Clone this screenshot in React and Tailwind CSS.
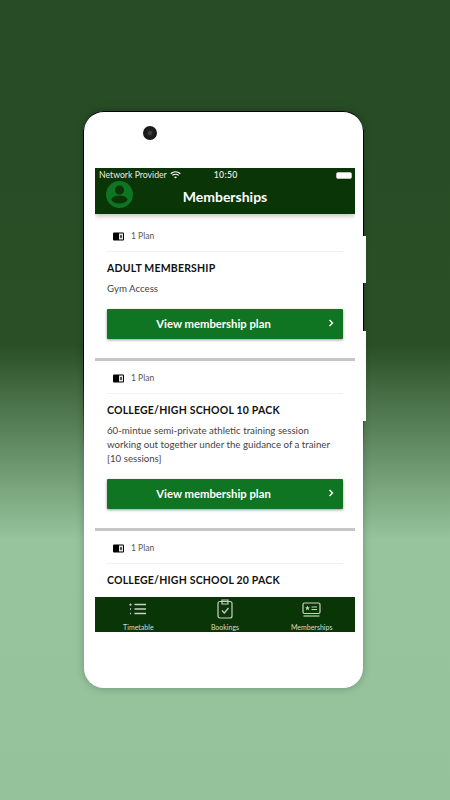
const FONT = 'font-["Lato","Open_Sans",sans-serif]'

function PlanIcon() {
  return (
    <svg width="11" height="9" viewBox="0 0 11 9">
      <rect x="0" y="0.5" width="11" height="8" rx="1" fill="#000" />
      <rect x="6" y="1.5" width="4" height="6" fill="#e8e8e8" />
      <rect x="7" y="3" width="2" height="3" fill="#555" />
    </svg>
  )
}

function Chevron() {
  return (
    <svg width="6" height="8" viewBox="0 0 6 8" fill="none" stroke="#fff" strokeWidth="1.4">
      <path d="M1.5 1 L4.5 4 L1.5 7" />
    </svg>
  )
}

function PlanCard({ title, lines, last }) {
  return (
    <div className={last ? '' : 'border-b-[3px] border-[#c6c6c6]'}>
      <div className="px-[12px]">
        <div className="h-[33px] flex items-center pl-[6px] pt-[3px] gap-[7px] border-b border-[#f1f1f1]">
          <PlanIcon />
          <span className="text-[8.5px] text-[#555]">1 Plan</span>
        </div>
        <h2 className="mt-[8px] h-[16px] leading-[16px] text-[10.5px] font-bold text-[#111] tracking-[0.2px]">{title}</h2>
        <div className="mt-[5px] text-[9.7px] leading-[14px] text-[#444]">
          {lines.map((line) => (
            <p key={line}>{line}</p>
          ))}
        </div>
        {!last && (
          <button
            type="button"
            className="relative mt-[14px] mb-[19px] w-full h-[30px] flex items-center justify-center rounded-[1px] bg-[#0f7522] text-white text-[11.3px] font-bold shadow-[0_1px_3px_rgba(0,0,0,0.4)]"
          >
            <span className="pr-[23px]">View membership plan</span>
            <span className="absolute right-[9px] top-[10px] flex">
              <Chevron />
            </span>
          </button>
        )}
      </div>
    </div>
  )
}

function TimetableIcon() {
  return (
    <svg width="18" height="14" viewBox="0 0 18 14" fill="none" stroke="#c8d2c6" strokeWidth="1.4">
      <path d="M5.5 2.5 H17 M5.5 7 H17 M5.5 11.5 H17" />
      <path d="M1.5 1 L2 2.1 L3 2.3 L2.2 3 L2.4 4 L1.5 3.5 L0.6 4 L0.8 3 L0 2.3 L1 2.1 Z" fill="#c8d2c6" stroke="none" />
      <path d="M1 7 H2 M1 11.5 H2" />
    </svg>
  )
}

function BookingsIcon() {
  return (
    <svg width="16" height="20" viewBox="0 0 16 20" fill="none" stroke="#c8d2c6" strokeWidth="1.2">
      <rect x="1" y="2.5" width="14" height="16.5" rx="2" />
      <path d="M5 1 H11 V5 H5 Z" />
      <path d="M5 11.5 L7.3 14 L11.5 9" />
    </svg>
  )
}

function MembershipsIcon() {
  return (
    <svg width="19" height="15" viewBox="0 0 19 15" fill="none" stroke="#c8d2c6" strokeWidth="1.2">
      <rect x="1" y="1" width="17" height="10.5" rx="1.5" />
      <path d="M1.5 14 H17.5" />
      <path d="M9.5 5 H15 M9.5 7.5 H15" />
      <path d="M5.5 3.6 L6.2 5.3 L8 5.4 L6.6 6.5 L7.1 8.2 L5.5 7.2 L3.9 8.2 L4.4 6.5 L3 5.4 L4.8 5.3 Z" fill="#c8d2c6" stroke="none" />
    </svg>
  )
}

function Tab({ icon, label }) {
  return (
    <div className="flex-1 flex flex-col items-center">
      <div className="h-[22px] flex items-center justify-center">{icon}</div>
      <span className="mt-[3px] text-[7px] leading-[8px] text-[#d5dcd3]">{label}</span>
    </div>
  )
}

export default function App() {
  return (
    <div className={`w-[450px] h-[800px] overflow-hidden pt-[111px] pl-[84px] bg-[linear-gradient(180deg,#274c26_0px,#2a4f26_345px,#97c49d_540px,#95c29b_800px)] ${FONT}`}>
      <div className="relative w-[279px] h-[577px] bg-white rounded-[20px] border-t border-black pt-[56px] px-[11px] shadow-[0_0_8px_rgba(0,0,0,0.25)]">
        {/* dark rim fades out towards the lower part of the phone */}
        <div className="absolute left-[-1px] top-[18px] w-[1px] h-[320px] bg-[linear-gradient(180deg,#000_70%,transparent)]" />
        <div className="absolute right-[-1px] top-[18px] w-[1px] h-[320px] bg-[linear-gradient(180deg,#000_70%,transparent)]" />
        <div className="absolute right-[-3px] top-[124px] w-[3px] h-[47px] bg-white" />
        <div className="absolute right-[-3px] top-[219px] w-[3px] h-[90px] bg-white" />
        <div className="absolute left-[59px] top-[14px] w-[14px] h-[14px] rounded-full bg-[#222] border-[3px] border-[#1a1a1a] flex items-center justify-center">
          <div className="w-[4px] h-[4px] rounded-full bg-[#444]" />
        </div>

        <div className="w-[260px] h-[464px] flex flex-col overflow-hidden">
          <div className="relative z-10 h-[46px] shrink-0 bg-[#0a3507] text-white shadow-[0_2px_5px_rgba(0,0,0,0.25)]">
            <div className="h-[14px] flex items-center px-[4px] text-[8.7px] text-[#e8e8e8]">
              <span>Network Provider</span>
              <svg className="ml-[3px]" width="11" height="8" viewBox="0 0 11 8" fill="none" stroke="#fff" strokeWidth="1.2">
                <path d="M0.7 2.8 C3.5 0.2 7.5 0.2 10.3 2.8 M2.3 4.4 C4 3 7 3 8.7 4.4" />
                <path d="M4 6 L5.5 7.6 L7 6 C6 5.2 5 5.2 4 6 Z" fill="#fff" stroke="none" />
              </svg>
              <span className="ml-[33px] font-semibold tracking-[0.3px]">10:50</span>
              <div className="ml-auto mr-[-1px] w-[16px] h-[7px] rounded-[2px] bg-white border border-[#bbb]" />
            </div>
            <div className="relative h-[32px] flex items-center justify-center pb-[4px]">
              <span className="text-[14px] font-bold">Memberships</span>
              <div className="absolute left-[11px] top-[-1px] w-[27px] h-[27px]">
                <svg width="27" height="27" viewBox="0 0 27 27">
                  <circle cx="13.5" cy="13.5" r="13.5" fill="#0f7522" />
                  <circle cx="13.5" cy="9" r="4.5" fill="#0a3507" />
                  <ellipse cx="13.5" cy="18.5" rx="8" ry="4" fill="#0a3507" />
                </svg>
              </div>
            </div>
          </div>

          <div className="flex-1 min-h-0 overflow-hidden pt-[5px] bg-white">
            <PlanCard title="ADULT MEMBERSHIP" lines={['Gym Access']} />
            <PlanCard
              title="COLLEGE/HIGH SCHOOL 10 PACK"
              lines={[
                '60-mintue semi-private athletic training session',
                'working out together under the guidance of a trainer',
                '[10 sessions]',
              ]}
            />
            <PlanCard
              last
              title="COLLEGE/HIGH SCHOOL 20 PACK"
              lines={['60-mintue semi-private athletic training session']}
            />
          </div>

          <div className="h-[35px] shrink-0 flex bg-[#0a3507] pt-[1px]">
            <Tab icon={<TimetableIcon />} label="Timetable" />
            <Tab icon={<BookingsIcon />} label="Bookings" />
            <Tab icon={<MembershipsIcon />} label="Memberships" />
          </div>
        </div>
      </div>
    </div>
  )
}
